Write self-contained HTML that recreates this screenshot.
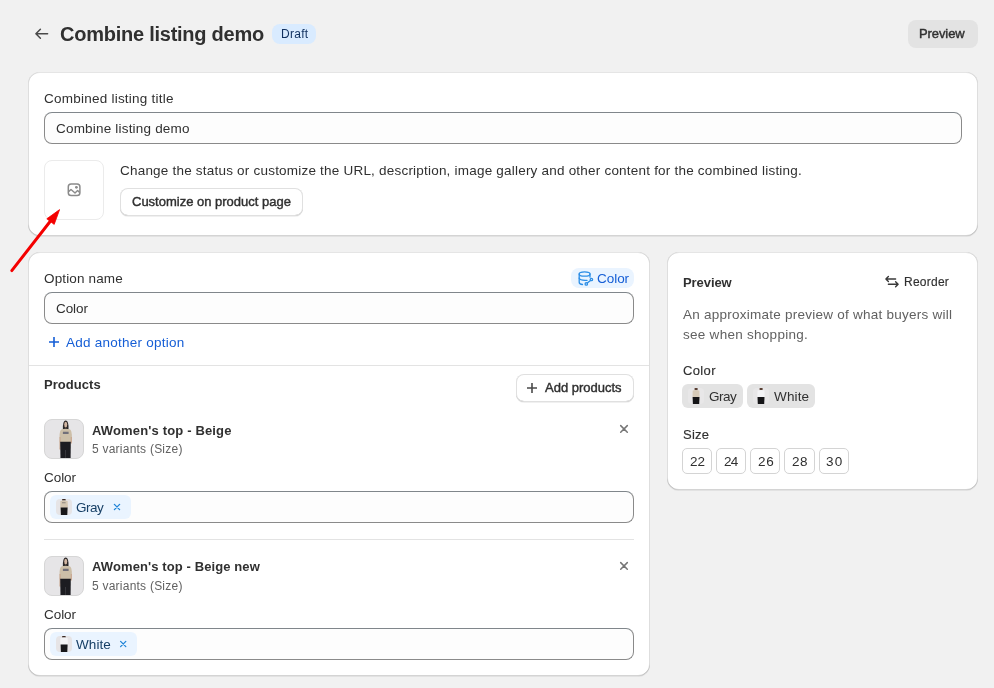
<!DOCTYPE html>
<html><head><meta charset="utf-8">
<style>
*{box-sizing:border-box;margin:0;padding:0}
html,body{width:994px;height:688px;overflow:hidden;background:#f1f1f1;font-family:"Liberation Sans",sans-serif;color:#303030;font-size:13px;position:relative}
.abs{position:absolute}
svg{position:absolute;overflow:visible}
.t{position:absolute;white-space:nowrap;line-height:1;will-change:transform}
.card{position:absolute;background:#fff;border-radius:12px;box-shadow:0 1px 0 0 rgba(26,26,26,.07),0 1px 0 0 rgba(204,204,204,.5) inset,0 -1px 0 0 rgba(0,0,0,.17) inset,-1px 0 0 0 rgba(0,0,0,.13) inset,1px 0 0 0 rgba(0,0,0,.13) inset}
.input{position:absolute;background:#fdfdfd;border:1px solid #8a8a8a;border-top-color:#80868b;border-radius:8px}
.btn{position:absolute;background:#fff;border-radius:8px;box-shadow:inset 0 0 0 1px #e0e0e0,inset 0 -1px 0 0 #b5b5b5,0 1px 0 0 rgba(0,0,0,.06)}
.thumb{position:absolute;width:40px;height:40px;border-radius:8px;background:#e6e5e7;border:1px solid #d6d6d6;overflow:hidden}
.chip{position:absolute;height:24px;border-radius:6px;background:#eaf4ff}
.sz{position:absolute;top:448px;height:26px;border:1px solid #d4d4d4;border-radius:5px;background:#fff}
</style></head><body>

<!-- header -->
<svg style="left:0;top:0" width="1" height="1"><path d="M40.4 29.2 L35.9 33.7 L40.4 38.2 M36.2 33.7 H47.6" fill="none" stroke="#4a4a4a" stroke-width="1.5" stroke-linecap="round" stroke-linejoin="round"/></svg>
<div class="abs" style="left:272px;top:24px;width:44px;height:20px;border-radius:8px;background:#d9ebff"></div>
<div class="abs" style="left:908px;top:20px;width:70px;height:28px;border-radius:8px;background:#e3e3e3"></div>

<!-- card 1 -->
<div class="card" style="left:28px;top:72px;width:950px;height:164px"></div>
<div class="input" style="left:44px;top:112px;width:918px;height:32px"></div>
<div class="abs" style="left:44px;top:160px;width:60px;height:60px;border:1px solid #ebebeb;border-radius:8px"></div>
<svg style="left:0;top:0" width="1" height="1"><rect x="68.3" y="184" width="11.6" height="11.6" rx="2.8" fill="none" stroke="#8a8a8a" stroke-width="1.5"/><path d="M68.6 191.6 L71 189.5 L75 193 L77.6 190.4 L79.6 192.4" fill="none" stroke="#8a8a8a" stroke-width="1.4" stroke-linejoin="round"/><circle cx="76.4" cy="187.3" r="1.4" fill="#8a8a8a"/></svg>
<div class="btn" style="left:120px;top:188px;width:183px;height:28px"></div>

<!-- card 2 -->
<div class="card" style="left:28px;top:252px;width:622px;height:424px"></div>
<div class="abs" style="left:571px;top:268px;width:63px;height:20px;border-radius:8px;background:#eaf4ff"></div>
<svg style="left:0;top:0" width="1" height="1"><g fill="none" stroke="#2c8ee6" stroke-width="1.3" stroke-linecap="round" transform="translate(0,-0.8)"><ellipse cx="584.6" cy="274.8" rx="5.4" ry="2.2"/><path d="M579.2 274.8 V283 Q579.2 285 582.5 285.3"/><path d="M590 274.8 V278"/><path d="M579.2 279 Q580 281 585 281.2 H587"/><circle cx="591.4" cy="280.3" r="1.2"/><circle cx="586.3" cy="284.7" r="1.2"/><path d="M590.5 281.2 L587.3 283.8"/></g></svg>
<div class="input" style="left:44px;top:292px;width:590px;height:32px"></div>
<svg style="left:0;top:0" width="1" height="1"><path d="M54 337 V347 M49 342 H59" stroke="#155ed6" stroke-width="1.6"/></svg>
<div class="abs" style="left:29px;top:365px;width:620px;height:1px;background:#e3e3e3"></div>
<div class="btn" style="left:516px;top:374px;width:118px;height:28px"></div>
<svg style="left:0;top:0" width="1" height="1"><path d="M532 382.9 V393 M527 388 H537" stroke="#4a4a4a" stroke-width="1.6"/></svg>

<div class="thumb" style="left:44px;top:419px"><svg style="left:0;top:0" width="40" height="40" viewBox="0 0 40 40"><path d="M17.9 9.5 Q17.6 0.6 20.7 0.6 Q23.8 0.6 23.5 9.5 Z" fill="#2b2727"/><ellipse cx="20.7" cy="4.6" rx="1.5" ry="2.8" fill="#d2b6a2"/><path d="M14.5 17 Q14.5 10 16.8 9.3 L20.7 8.8 L24.6 9.3 Q26.9 10 26.9 17 L26.6 22.5 H14.8 Z" fill="#cdbfa8"/><path d="M14.5 17 L15.7 17 L15.6 29.5 L14.4 29.5 Z" fill="#c9a892"/><path d="M25.7 17 L26.9 17 L26.9 23.5 L25.7 23.5 Z" fill="#c9a892"/><path d="M15.2 21.8 H25.8 L25.6 40 H15.5 Z" fill="#1c1c21"/><path d="M20.3 30 L21 30 L20.9 40 L20.4 40 Z" fill="#45454a"/><path d="M17.9 11.8 H23.6 V14 H17.9 Z" fill="#626272" opacity=".85"/></svg></div>
<svg style="left:0;top:0" width="1" height="1"><path d="M620.7 425.6 L627.3 432.2 M627.3 425.6 L620.7 432.2" stroke="#767676" stroke-width="1.5" stroke-linecap="round"/></svg>
<div class="input" style="left:44px;top:491px;width:590px;height:32px"></div>
<div class="chip" style="left:50px;top:495px;width:81px"></div>
<div class="abs" style="left:56px;top:499px;width:16px;height:16px;border-radius:4px;background:#e6e4e6;overflow:hidden"><svg style="left:0;top:0" width="16" height="16" viewBox="0 0 16 16"><path d="M6.2 0 H9.6 V1.6 H6.2 Z" fill="#3b2b25"/><path d="M4.4 2 Q8 1.2 11.6 2 L12 8.8 H4.2 Z" fill="#d3c6b2"/><path d="M4.6 8.6 H11.6 L11.3 16 H4.9 Z" fill="#17171a"/><path d="M6 3.2 H9.6 V4.2 H6 Z" fill="#8d8680"/></svg></div>
<svg style="left:0;top:0" width="1" height="1"><path d="M114.4 504.4 L119.6 509.6 M119.6 504.4 L114.4 509.6" stroke="#1f84d8" stroke-width="1.3" stroke-linecap="round"/></svg>

<div class="abs" style="left:44px;top:539px;width:590px;height:1px;background:#e3e3e3"></div>
<div class="thumb" style="left:44px;top:556px"><svg style="left:0;top:0" width="40" height="40" viewBox="0 0 40 40"><path d="M17.9 9.5 Q17.6 0.6 20.7 0.6 Q23.8 0.6 23.5 9.5 Z" fill="#2b2727"/><ellipse cx="20.7" cy="4.6" rx="1.5" ry="2.8" fill="#d2b6a2"/><path d="M14.5 17 Q14.5 10 16.8 9.3 L20.7 8.8 L24.6 9.3 Q26.9 10 26.9 17 L26.6 22.5 H14.8 Z" fill="#cdbfa8"/><path d="M14.5 17 L15.7 17 L15.6 29.5 L14.4 29.5 Z" fill="#c9a892"/><path d="M25.7 17 L26.9 17 L26.9 23.5 L25.7 23.5 Z" fill="#c9a892"/><path d="M15.2 21.8 H25.8 L25.6 40 H15.5 Z" fill="#1c1c21"/><path d="M20.3 30 L21 30 L20.9 40 L20.4 40 Z" fill="#45454a"/><path d="M17.9 11.8 H23.6 V14 H17.9 Z" fill="#626272" opacity=".85"/></svg></div>
<svg style="left:0;top:0" width="1" height="1"><path d="M620.7 562.6 L627.3 569.2 M627.3 562.6 L620.7 569.2" stroke="#767676" stroke-width="1.5" stroke-linecap="round"/></svg>
<div class="input" style="left:44px;top:628px;width:590px;height:32px"></div>
<div class="chip" style="left:50px;top:632px;width:87px"></div>
<div class="abs" style="left:56px;top:636px;width:16px;height:16px;border-radius:4px;background:#e6e4e6;overflow:hidden"><svg style="left:0;top:0" width="16" height="16" viewBox="0 0 16 16"><path d="M6.2 0 H9.6 V1.6 H6.2 Z" fill="#3b2b25"/><path d="M4.4 2 Q8 1.2 11.6 2 L12 8.8 H4.2 Z" fill="#f3f3f5"/><path d="M4.6 8.6 H11.6 L11.3 16 H4.9 Z" fill="#17171a"/></svg></div>
<svg style="left:0;top:0" width="1" height="1"><path d="M120.6 641.4 L125.8 646.6 M125.8 641.4 L120.6 646.6" stroke="#1f84d8" stroke-width="1.3" stroke-linecap="round"/></svg>

<!-- card 3 -->
<div class="card" style="left:667px;top:252px;width:311px;height:238px"></div>
<svg style="left:0;top:0" width="1" height="1"><g fill="none" stroke="#3a3a3a" stroke-width="1.4" stroke-linecap="round" stroke-linejoin="round"><path d="M888.4 276.5 L885.9 279 L888.4 281.5 M886.2 279 H895.6"/><path d="M895.6 281.8 L898.1 284.3 L895.6 286.8 M897.8 284.3 H888.4"/></g></svg>
<div class="abs" style="left:682px;top:384px;width:61px;height:24px;border-radius:6px;background:#e3e3e3"></div>
<svg style="left:0;top:0" width="1" height="1"><rect x="688" y="388" width="16" height="16" rx="4" fill="#e8e7e8"/><path d="M694.6 388 H697.6 V390.2 H694.6 Z" fill="#5a4034"/><path d="M692.7 390.4 Q696 389.6 699.4 390.4 L699.6 397.2 H692.5 Z" fill="#d6cab8"/><path d="M692.6 397 H699.5 L699.2 404 H692.9 Z" fill="#151517"/></svg>
<div class="abs" style="left:747px;top:384px;width:68px;height:24px;border-radius:6px;background:#e3e3e3"></div>
<svg style="left:0;top:0" width="1" height="1"><rect x="753" y="388" width="16" height="16" rx="4" fill="#e8e7e8"/><path d="M759.6 388 H762.6 V390.2 H759.6 Z" fill="#5a4034"/><path d="M757.5 390.4 Q761 389.6 764.5 390.4 L764.6 397.2 H757.4 Z" fill="#f4f4f6"/><path d="M757.5 397 H764.5 L764.2 404 H757.8 Z" fill="#151517"/></svg>
<div class="sz" style="left:682px;width:30px"></div>
<div class="sz" style="left:716px;width:30px"></div>
<div class="sz" style="left:750px;width:30px"></div>
<div class="sz" style="left:784px;width:31px"></div>
<div class="sz" style="left:819px;width:30px"></div>

<div class="t" style="left:60.00px;top:24.00px;font-size:20px;color:#303030;letter-spacing:-0.246px;font-weight:bold">Combine listing demo</div>
<div class="t" style="left:280.60px;top:28.00px;font-size:12px;color:#10305f;letter-spacing:0.283px">Draft</div>
<div class="t" style="left:918.80px;top:27.00px;font-size:13px;color:#303030;letter-spacing:-0.091px;-webkit-text-stroke:0.42px #303030">Preview</div>
<div class="t" style="left:44.00px;top:92.00px;font-size:13.5px;color:#303030;letter-spacing:0.236px">Combined listing title</div>
<div class="t" style="left:56.00px;top:122.00px;font-size:13.5px;color:#303030;letter-spacing:0.195px">Combine listing demo</div>
<div class="t" style="left:120.00px;top:164.40px;font-size:13.5px;color:#303030;letter-spacing:0.210px">Change the status or customize the URL, description, image gallery and other content for the combined listing.</div>
<div class="t" style="left:131.70px;top:195.30px;font-size:13px;color:#303030;letter-spacing:-0.002px;-webkit-text-stroke:0.42px #303030">Customize on product page</div>
<div class="t" style="left:44.00px;top:272.10px;font-size:13.5px;color:#303030;letter-spacing:0.141px">Option name</div>
<div class="t" style="left:597.20px;top:272.00px;font-size:13.5px;color:#155ed6;letter-spacing:-0.041px">Color</div>
<div class="t" style="left:56.00px;top:302.10px;font-size:13.5px;color:#303030;letter-spacing:-0.091px">Color</div>
<div class="t" style="left:66.20px;top:336.10px;font-size:13.5px;color:#155ed6;letter-spacing:0.242px">Add another option</div>
<div class="t" style="left:43.70px;top:378.30px;font-size:13px;color:#303030;letter-spacing:0.041px;font-weight:bold">Products</div>
<div class="t" style="left:545.00px;top:381.20px;font-size:13px;color:#303030;letter-spacing:-0.009px;-webkit-text-stroke:0.42px #303030">Add products</div>
<div class="t" style="left:92.00px;top:423.70px;font-size:13px;color:#303030;letter-spacing:0.156px;font-weight:bold">AWomen's top - Beige</div>
<div class="t" style="left:92.20px;top:442.80px;font-size:12px;color:#616161;letter-spacing:0.231px">5 variants (Size)</div>
<div class="t" style="left:44.00px;top:471.20px;font-size:13.5px;color:#303030;letter-spacing:-0.066px">Color</div>
<div class="t" style="left:75.80px;top:500.60px;font-size:13.5px;color:#163f66;letter-spacing:-0.468px">Gray</div>
<div class="t" style="left:92.00px;top:560.30px;font-size:13px;color:#303030;letter-spacing:0.106px;font-weight:bold">AWomen's top - Beige new</div>
<div class="t" style="left:92.20px;top:579.80px;font-size:12px;color:#616161;letter-spacing:0.231px">5 variants (Size)</div>
<div class="t" style="left:44.00px;top:608.00px;font-size:13.5px;color:#303030;letter-spacing:-0.066px">Color</div>
<div class="t" style="left:76.30px;top:638.00px;font-size:13.5px;color:#163f66;letter-spacing:0.075px">White</div>
<div class="t" style="left:682.70px;top:275.90px;font-size:13px;color:#303030;letter-spacing:-0.072px;font-weight:bold">Preview</div>
<div class="t" style="left:903.80px;top:275.90px;font-size:12px;color:#303030;letter-spacing:0.240px;-webkit-text-stroke:0.15px #303030">Reorder</div>
<div class="t" style="left:682.50px;top:308.40px;font-size:13.5px;color:#616161;letter-spacing:0.245px">An approximate preview of what buyers will</div>
<div class="t" style="left:682.50px;top:328.40px;font-size:13.5px;color:#616161;letter-spacing:0.274px">see when shopping.</div>
<div class="t" style="left:682.60px;top:364.00px;font-size:13px;color:#303030;letter-spacing:0.366px;-webkit-text-stroke:0.15px #303030">Color</div>
<div class="t" style="left:708.70px;top:390.40px;font-size:13.5px;color:#303030;letter-spacing:-0.501px">Gray</div>
<div class="t" style="left:774.20px;top:390.40px;font-size:13.5px;color:#303030;letter-spacing:0.150px">White</div>
<div class="t" style="left:682.60px;top:427.80px;font-size:13px;color:#303030;letter-spacing:0.214px;-webkit-text-stroke:0.15px #303030">Size</div>
<div class="t" style="left:690.10px;top:455.30px;font-size:13.5px;color:#303030;letter-spacing:-0.008px">22</div>
<div class="t" style="left:724.00px;top:455.30px;font-size:13.5px;color:#303030;letter-spacing:-0.708px">24</div>
<div class="t" style="left:757.90px;top:455.30px;font-size:13.5px;color:#303030;letter-spacing:0.792px">26</div>
<div class="t" style="left:791.90px;top:455.30px;font-size:13.5px;color:#303030;letter-spacing:0.492px">28</div>
<div class="t" style="left:826.00px;top:455.30px;font-size:13.5px;color:#303030;letter-spacing:1.192px">30</div>

<!-- arrow -->
<svg style="left:0;top:0" width="1" height="1"><line x1="11.8" y1="270.6" x2="50.5" y2="221" stroke="#f40000" stroke-width="3" stroke-linecap="round"/><path d="M59.6 209.6 L46.8 218.8 L54.2 224.4 Z" fill="#f40000" stroke="#f40000" stroke-width="0.8" stroke-linejoin="round"/></svg>

</body></html>
